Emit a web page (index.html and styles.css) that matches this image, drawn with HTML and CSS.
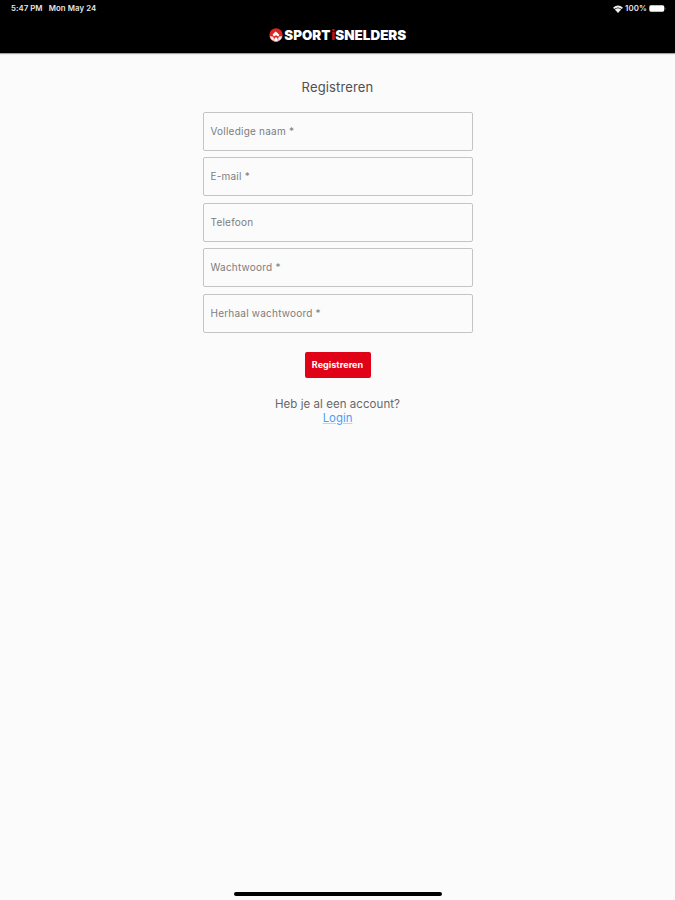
FILE: index.html
```html
<!DOCTYPE html>
<html lang="nl">
<head>
<meta charset="utf-8">
<title>Registreren</title>
<link rel="stylesheet" href="styles.css">
</head>
<body>
<header class="header">
  <div class="status">
    <div class="status-left"><span class="time">5:47 PM</span><span class="date">Mon May 24</span></div>
    <div class="status-right">
      <svg class="wifi" viewBox="0 0 10 8"><path d="M0 2.7Q5-1.7 10 2.7L8.8 4Q5 .9 1.2 4Z"/><path d="M1.8 4.6Q5 2 8.2 4.6L5 8Z"/></svg>
      <span class="percent">100%</span>
      <svg class="battery" viewBox="0 0 18 7"><rect x=".3" y=".3" width="15" height="6.4" rx="1.6"/><path d="M16.3 2.4q1.2 1.1 0 2.2z" opacity=".6"/></svg>
    </div>
  </div>
  <div class="logo">
    <svg class="mark" viewBox="0 0 14 14"><circle cx="7" cy="7" r="6.7" fill="#dc2420"/><path d="M.8 8.2 3.6 8.4 4.9 10 4.6 13.2A6.7 6.7 0 0 1 .8 8.2Z" fill="#eee"/><path d="M13.2 8.2 10.4 8.4 9.1 10 9.4 13.2A6.7 6.7 0 0 0 13.2 8.2Z" fill="#eee"/><path d="M3.6 6.6 6.5 3.4 8 4.4 10.4 7 9.2 8.6 7 7.2 4.8 8.6Z" fill="#fff"/><path d="M5.2 11 7 9 8.8 11V13.4H5.2Z" fill="#fff"/></svg>
    <svg class="wordmark" viewBox="0 0 123 24"><text x=".3" y="16.6" textLength="46" lengthAdjust="spacingAndGlyphs">SPORT</text><text class="red" x="47.2" y="16.6">i</text><text x="51.3" y="16.6" textLength="71" lengthAdjust="spacingAndGlyphs">SNELDERS</text></svg>
  </div>
</header>
<main class="main">
  <h1 class="title">Registreren</h1>
  <form class="form">
    <label class="field">Volledige naam *</label>
    <label class="field">E-mail *</label>
    <label class="field">Telefoon</label>
    <label class="field">Wachtwoord *</label>
    <label class="field">Herhaal wachtwoord *</label>
    <button class="submit" type="button">Registreren</button>
  </form>
  <p class="question">Heb je al een account?</p>
  <a class="login" href="#">Login</a>
</main>
<div class="home-bar"></div>
</body>
</html>
```

FILE: styles.css
```css
* { box-sizing: border-box; }
body {
  margin: 0;
  height: 900px;
  display: flex;
  flex-direction: column;
  align-items: center;
  overflow: hidden;
  background: #fbfbfb;
  color: #5c5c5c;
  font-family: Inter, "Liberation Sans", sans-serif;
}
.header {
  width: 100%;
  height: 53px;
  background: #000;
  box-shadow: 0 1px 1px rgba(0, 0, 0, .35);
}
.status {
  height: 17px;
  padding: 0 10px 0 11px;
  display: flex;
  justify-content: space-between;
  color: #e8e8e8;
  font-size: 7.8px;
  font-weight: 600;
  line-height: 17px;
}
.status-left, .status-right { display: flex; align-items: center; }
.status-left { gap: 6px; }
.time { letter-spacing: .05px; }
.date { letter-spacing: .1px; }
.wifi { width: 10px; height: 8px; margin-right: 2px; fill: #eee; }
.percent { width: 22px; letter-spacing: .1px; }
.battery { width: 18px; height: 7px; margin-left: 2px; margin-right: -2px; fill: #fff; }
.logo {
  height: 35px;
  display: flex;
  align-items: center;
  justify-content: center;
  gap: 1px;
}
.mark { width: 14px; height: 14px; }
.wordmark {
  width: 123px;
  height: 24px;
  overflow: visible;
  fill: #fff;
  font-family: Inter, sans-serif;
  font-size: 13.4px;
  font-weight: 900;
}
.red { fill: #b51219; }
.main {
  width: 270px;
  display: flex;
  flex-direction: column;
  align-items: center;
}
.title {
  margin: 25px 0 15.5px;
  font-size: 13px;
  font-weight: 400;
  line-height: 18px;
  letter-spacing: .15px;
  color: #505050;
}
.form {
  width: 100%;
  display: flex;
  flex-direction: column;
  align-items: center;
  gap: 6.5px;
}
.field {
  width: 100%;
  height: 39px;
  padding: 0 7px 1px;
  display: flex;
  align-items: center;
  border: 1px solid #c4c4c4;
  border-radius: 2px;
  font-size: 10px;
  color: #7d7d7d;
  letter-spacing: .22px;
}
.submit {
  width: 66px;
  height: 26px;
  margin-top: 13px;
  padding: 0 0 1px;
  border: 0;
  border-radius: 2px;
  background: #e00318;
  color: #fff;
  font: 700 9px/25px Inter, sans-serif;
  letter-spacing: .05px;
}
.question {
  margin: 19px 0 0;
  font-size: 11.5px;
  line-height: 14px;
  letter-spacing: .05px;
  color: #686868;
}
.login {
  font-size: 11.4px;
  line-height: 14px;
  color: #4b9cf5;
  text-decoration: underline;
  text-decoration-color: #b5d5fa;
}
.home-bar {
  width: 208px;
  height: 4px;
  margin: auto 0 4px;
  border-radius: 2px;
  background: #000;
}
```
